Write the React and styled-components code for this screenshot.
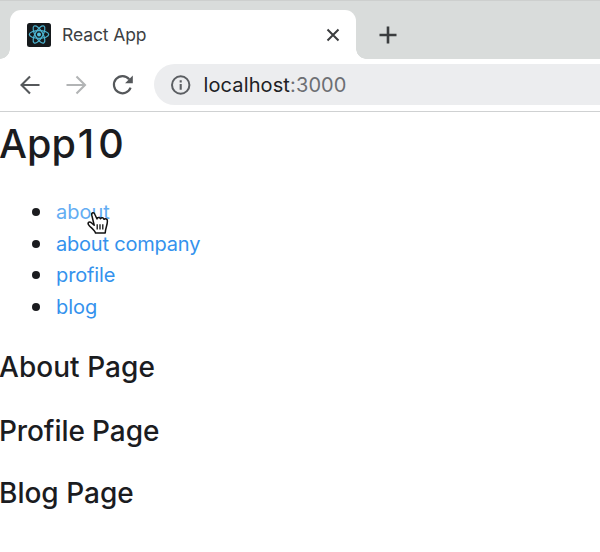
import React from "react";
import styled, { createGlobalStyle } from "styled-components";

const GlobalStyle = createGlobalStyle`
  * { box-sizing: border-box; }
  body { margin: 0; background: #fff; overflow: hidden; font-family: Inter, "Liberation Sans", sans-serif; color: #1b1c1f; }
  svg { display: block; flex: none; }
`;

const Window = styled.div`
  width: 600px;
  height: 552px;
  overflow: hidden;
  background: #fff;
`;

const TabStrip = styled.div`
  display: flex;
  align-items: flex-end;
  height: 59px;
  background: #d9dcdb;
  border-top: 1px solid #cdcfce;
`;

const StripEdge = styled.div`
  width: 10px;
  height: 49px;
  background: radial-gradient(circle 10px at 0 0, transparent 9.5px, #fff 10px) 0 100% / 10px 10px no-repeat;
`;

const StripEdgeRight = styled(StripEdge)`
  background: radial-gradient(circle 10px at 100% 0, transparent 9.5px, #fff 10px) 0 100% / 10px 10px no-repeat;
`;

const Tab = styled.div`
  display: flex;
  align-items: center;
  width: 346px;
  height: 49px;
  padding: 0 16px 0 17px;
  border-radius: 11px 11px 0 0;
  background: #fff;
`;

const TabTitle = styled.span`
  flex: 1;
  margin-left: 11px;
  font-size: 17.5px;
  line-height: 24px;
  letter-spacing: ${(p) => p.$tracking};
  color: #3c3f43;
`;

const NewTab = styled.div`
  display: flex;
  align-items: center;
  height: 49px;
  margin-left: 13px;
`;

const Toolbar = styled.div`
  display: flex;
  align-items: center;
  height: 53px;
  padding: 0 0 1px 18px;
  border-bottom: 1px solid #cfd1d2;
`;

const NavButtons = styled.div`
  display: flex;
  gap: 22px;
  width: 136px;
`;

const AddressBar = styled.div`
  display: flex;
  align-items: center;
  flex: 1;
  height: 41px;
  padding-left: 16px;
  border-radius: 21px 0 0 21px;
  background: #ecedef;
`;

const Url = styled.span`
  margin-left: 11.5px;
  font-size: 20px;
  line-height: 28px;
  letter-spacing: ${(p) => p.$tracking};
  color: #202124;
`;

const Port = styled.span`
  color: #6c6f73;
`;

const Title = styled.h1`
  margin: 8px 0 0;
  font-size: 39.5px;
  font-weight: 500;
  line-height: 48px;
  text-indent: -1px;
`;

const Digits = styled.span`
  margin-left: 2px;
  letter-spacing: 4px;
`;

const Links = styled.ul`
  margin: 28px 0 0;
  padding: 0 0 0 32px;
  list-style: none;
`;

const LinkItem = styled.li`
  display: flex;
  align-items: center;
  height: 31.7px;
  &::before {
    content: "";
    width: 8px;
    height: 8px;
    margin-right: 16px;
    border-radius: 50%;
    background: #1b1c1f;
  }
`;

const PageLink = styled.a`
  position: relative;
  font-size: 20px;
  line-height: 30px;
  letter-spacing: ${(p) => p.$tracking};
  color: ${(p) => (p.$hovered ? "#63adf3" : "#3492ed")};
`;

const Pointer = styled.svg`
  position: absolute;
  left: 28.5px;
  top: 12px;
  overflow: visible;
`;

const Sections = styled.div`
  display: grid;
  grid-template-rows: 64px 62px 62px;
  margin-top: 26.2px;
`;

const SectionTitle = styled.h2`
  margin: 0;
  font-size: 28px;
  font-weight: 500;
  line-height: 36px;
  text-indent: -1px;
  letter-spacing: ${(p) => p.$tracking};
  white-space: nowrap;
`;

const ReactLogo = () => (
  <svg width="24" height="24" viewBox="0 0 24 24">
    <rect width="24" height="24" rx="2.5" fill="#15191c" />
    <g fill="none" stroke="#4db5d2" strokeWidth="1.2">
      <ellipse cx="12" cy="11.5" rx="9.7" ry="3.8" />
      <ellipse cx="12" cy="11.5" rx="9.7" ry="3.8" transform="rotate(60 12 11.5)" />
      <ellipse cx="12" cy="11.5" rx="9.7" ry="3.8" transform="rotate(120 12 11.5)" />
    </g>
    <circle cx="12" cy="11.5" r="2" fill="#55c4e2" />
  </svg>
);

const Arrow = ({ color, forward }) => (
  <svg width="24" height="24" viewBox="0 0 24 24" fill="none" stroke={color} strokeWidth="2.1">
    <path d={forward ? "M2.5 12H20.5M12.5 3.5L21 12L12.5 20.5" : "M21.5 12H4M12 3.5L3.5 12L12 20.5"} />
  </svg>
);

const Reload = () => (
  <svg width="24" height="24" viewBox="0 0 24 24">
    <path d="M19.2 6.2A8.6 8.6 0 1 0 20.6 14.7" fill="none" stroke="#55585b" strokeWidth="2.2" />
    <path d="M22.8 2.5V10.2H15.1Z" fill="#55585b" />
  </svg>
);

const Info = () => (
  <svg width="22" height="22" viewBox="0 0 22 22">
    <circle cx="10.7" cy="11" r="8.7" fill="none" stroke="#5b5e62" strokeWidth="2" />
    <path d="M10.7 10.1V15.8M10.7 6.3V8.4" stroke="#5b5e62" strokeWidth="2.1" />
  </svg>
);

const Hand = () => (
  <Pointer width="26" height="28" viewBox="0 0 26 28">
    <path
      d="M9.2 16.2L6.8 6.2C6.2 3.3 9 2.9 9.8 5.2L12 10C12.3 7.9 14.8 7.9 15.5 9.7C16.5 8 18.6 8.5 19 10.3C20.5 9.1 22.5 10 22.4 12C22.4 16.5 20.6 18.2 20.2 24H10.5C10 21.5 7 19.5 4.3 16.7C1.8 14.2 3.8 11.8 6.3 13.7Z"
      fill="#fff"
      stroke="#111"
      strokeWidth="1.5"
      strokeLinejoin="round"
    />
    <path d="M12.2 15.2V20.5M15 15.2V20.5M17.8 15.2V20.5" stroke="#111" strokeWidth="1.3" />
  </Pointer>
);

const links = [
  { label: "about", tracking: "0px", hovered: true },
  { label: "about company", tracking: "-0.2px" },
  { label: "profile", tracking: "-0.12px" },
  { label: "blog", tracking: "0px" },
];

const sections = [
  { label: "About Page", tracking: "0.05px" },
  { label: "Profile Page", tracking: "-0.1px" },
  { label: "Blog Page", tracking: "0px" },
];

export default function App() {
  return (
    <Window>
      <GlobalStyle />
      <TabStrip>
        <StripEdge />
        <Tab>
          <ReactLogo />
          <TabTitle $tracking="-0.1px">React App</TabTitle>
          <svg width="14" height="14" viewBox="0 0 14 14" stroke="#3b3d3f" strokeWidth="2">
            <path d="M1.5 1.5L12.5 12.5M12.5 1.5L1.5 12.5" />
          </svg>
        </Tab>
        <StripEdgeRight />
        <NewTab>
          <svg width="18" height="18" viewBox="0 0 18 18" stroke="#3b3d3f" strokeWidth="2.6">
            <path d="M9 0.5V17.5M0.5 9H17.5" />
          </svg>
        </NewTab>
      </TabStrip>
      <Toolbar>
        <NavButtons>
          <Arrow color="#55585b" />
          <Arrow color="#b2b4b5" forward />
          <Reload />
        </NavButtons>
        <AddressBar>
          <Info />
          <Url $tracking="0.12px">localhost<Port>:3000</Port></Url>
        </AddressBar>
      </Toolbar>
      <Title>App<Digits>10</Digits></Title>
      <Links>
        {links.map(({ label, tracking, hovered }) => (
          <LinkItem key={label}>
            <PageLink $tracking={tracking} $hovered={hovered}>
              {label}
              {hovered && <Hand />}
            </PageLink>
          </LinkItem>
        ))}
      </Links>
      <Sections>
        {sections.map(({ label, tracking }) => (
          <SectionTitle key={label} $tracking={tracking}>{label}</SectionTitle>
        ))}
      </Sections>
    </Window>
  );
}
